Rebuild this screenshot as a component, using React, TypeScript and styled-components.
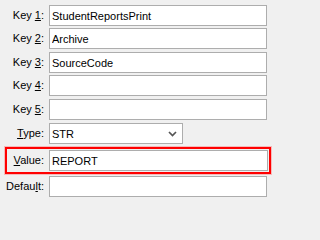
import React from "react";
import styled, { createGlobalStyle } from "styled-components";

const GlobalStyle = createGlobalStyle`
  html, body {
    margin: 0;
    padding: 0;
    background: #f0f0f0;
  }
  body {
    font-family: "Liberation Sans", Arial, sans-serif;
    font-size: 11px;
    color: #000;
  }
`;

const Form = styled.div`
  width: 271px;
  height: 202px;
  box-sizing: border-box;
  padding: 5px 0 0 5px;
  display: flex;
  flex-direction: column;
  background: #f0f0f0;
`;

const Row = styled.div<{ $top?: number }>`
  display: grid;
  grid-template-columns: 39px 1fr;
  column-gap: 5px;
  align-items: center;
  margin-right: 4px;
  margin-top: ${(p) => p.$top ?? 0}px;
`;

const HighlightRow = styled(Row)`
  grid-template-columns: 37px 1fr;
  margin-right: 0;
  padding: 1px 1px 1px 0;
  border: 2px solid #ff0000;
  box-shadow: 0 0 0 1px rgba(255, 90, 90, 0.35);
`;

const Label = styled.label`
  text-align: right;
  white-space: nowrap;
  line-height: 13px;

  u {
    text-decoration: underline;
    text-underline-offset: 1px;
  }
`;

const Field = styled.input`
  box-sizing: border-box;
  height: 21px;
  width: 100%;
  margin: 0;
  padding: 0 2px;
  border: 1px solid #adadad;
  background: #fff;
  font-family: inherit;
  font-size: 11px;
  color: #000;
  outline: none;
`;

const Combo = styled.div`
  box-sizing: border-box;
  height: 21px;
  width: 134px;
  display: flex;
  align-items: center;
  justify-content: space-between;
  padding: 0 5px 0 2px;
  border: 1px solid #adadad;
  background: #fff;
`;

const Chevron = () => (
  <svg width="9" height="6" viewBox="0 0 9 6">
    <path d="M1 1 L4.5 4.5 L8 1" fill="none" stroke="#555" strokeWidth="1.7" />
  </svg>
);

const KeyLabel = ({ n }: { n: number }) => (
  <Label>
    Key <u>{n}</u>:
  </Label>
);

const keys = ["StudentReportsPrint", "Archive", "SourceCode", "", ""];
const tops = [0, 2, 3, 2, 3];

export default function App() {
  return (
    <>
      <GlobalStyle />
      <Form>
        {keys.map((v, i) => (
          <Row key={i} $top={tops[i]}>
            <KeyLabel n={i + 1} />
            <Field value={v} readOnly />
          </Row>
        ))}
        <Row $top={3}>
          <Label>
            <u>T</u>ype:
          </Label>
          <Combo>
            <span>STR</span>
            <Chevron />
          </Combo>
        </Row>
        <HighlightRow $top={3}>
          <Label>
            <u>V</u>alue:
          </Label>
          <Field value="REPORT" readOnly />
        </HighlightRow>
        <Row $top={2}>
          <Label>
            Defau<u>l</u>t:
          </Label>
          <Field value="" readOnly />
        </Row>
      </Form>
    </>
  );
}
